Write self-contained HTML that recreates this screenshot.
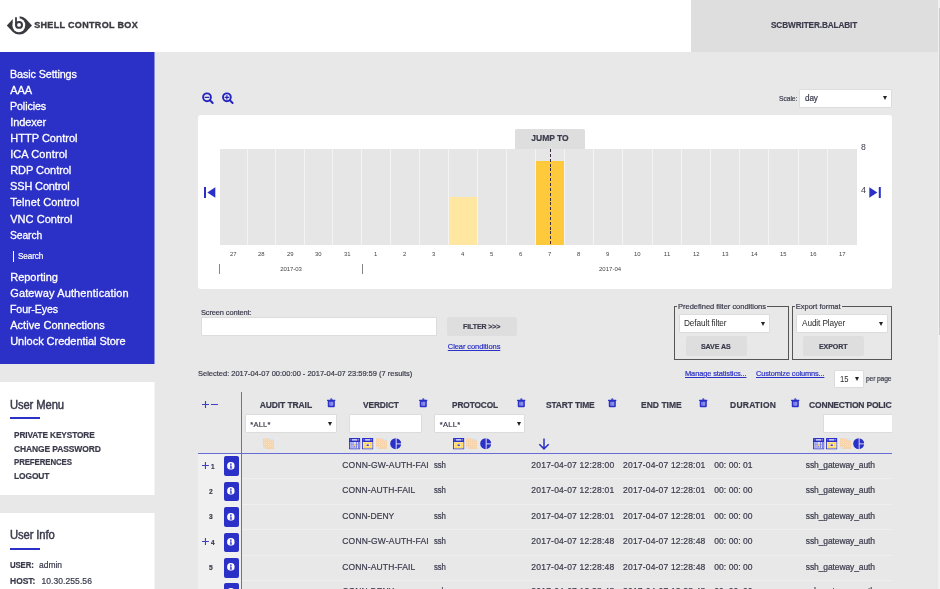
<!DOCTYPE html>
<html><head><meta charset="utf-8"><title>Shell Control Box</title>
<style>
html,body{margin:0;padding:0;}
html{width:940px;height:589px;overflow:hidden;}
body{width:940px;height:589px;overflow:hidden;background:#e8e8e8;position:relative;font-family:"Liberation Sans",sans-serif;}
div,span,svg{position:absolute;box-sizing:border-box;}
svg{overflow:visible;}
.t{white-space:pre;line-height:1;font-family:"Liberation Sans",sans-serif;-webkit-text-stroke:0.2px currentColor;}
.w{background:#fff;}
.btn{background:#dedede;border-radius:2px;}
.inp{background:#fff;border:1px solid #dcdcdc;border-radius:1px;}
.arr{width:0;height:0;border-left:2.4px solid transparent;border-right:2.4px solid transparent;border-top:4px solid #222;}
.sep{width:1px;top:149px;height:96px;background:#f4f4f4;}
.rowl{left:198px;width:43px;background:#f0f0f0;}
.rsep{left:198px;width:694px;height:1px;background:#efefef;}
.ib{left:224px;width:15px;height:19.5px;background:#2b30c6;border-radius:2px;}
</style></head><body>
<div id="root" style="left:0;top:0;width:940px;height:589px;overflow:hidden">
<svg width="0" height="0" style="left:0;top:0">
<defs>
<symbol id="trash" viewBox="0 0 9 10"><path d="M3.1 1.9 Q3.3 0.2 4.5 0.2 Q5.7 0.2 5.9 1.9z" fill="#2b30c6"/><rect x="0" y="1.7" width="9" height="1.3" rx="0.4" fill="#2b30c6"/><path d="M0.8 2.9h7.4v5.7a1.2 1.2 0 0 1-1.2 1.2h-5a1.2 1.2 0 0 1-1.2-1.2z" fill="#2b30c6"/><rect x="2.3" y="4" width="4.4" height="4" fill="#5d61da"/><rect x="2.7" y="4" width="0.9" height="4" fill="#9a9de8"/><rect x="4.1" y="4" width="0.9" height="4" fill="#9a9de8"/><rect x="5.5" y="4" width="0.9" height="4" fill="#9a9de8"/></symbol>
<symbol id="ic1" viewBox="0 0 12 12"><rect x="0" y="0" width="12" height="12" rx="0.6" fill="#2b30c6"/><rect x="0.9" y="4.2" width="10.2" height="6.9" fill="#dddef7"/><rect x="3.2" y="1.35" width="5.6" height="1.25" fill="#fff"/><rect x="1.5" y="1.5" width="0.9" height="0.9" fill="#e6e7fb"/><rect x="9.6" y="1.5" width="0.9" height="0.9" fill="#e6e7fb"/><rect x="1.7" y="4.2" width="0.9" height="6.9" fill="#6d71dc"/><rect x="3.8" y="4.2" width="0.9" height="6.9" fill="#6d71dc"/><rect x="7.4" y="4.2" width="0.9" height="6.9" fill="#6d71dc"/><rect x="9.5" y="4.2" width="0.9" height="6.9" fill="#6d71dc"/><rect x="1.7" y="6.3" width="8.7" height="0.7" fill="#8f92e4"/><rect x="4.8" y="6.9" width="2.5" height="1.4" fill="#ffd24d"/><rect x="5.2" y="8.9" width="1.6" height="1" fill="#4b50d4"/></symbol>
<symbol id="ic2" viewBox="0 0 12 12"><rect x="0" y="0" width="12" height="12" rx="0.6" fill="#2b30c6"/><rect x="0.9" y="4.2" width="10.2" height="6.9" fill="#ffefc0"/><rect x="3.2" y="1.35" width="5.6" height="1.25" fill="#fff"/><rect x="1.5" y="1.5" width="0.9" height="0.9" fill="#e6e7fb"/><rect x="9.6" y="1.5" width="0.9" height="0.9" fill="#e6e7fb"/><g fill="#ffd24d"><rect x="1.6" y="4.8" width="2.6" height="1.5"/><rect x="4.7" y="4.8" width="2.6" height="1.5"/><rect x="7.8" y="4.8" width="2.6" height="1.5"/><rect x="1.6" y="6.9" width="2.6" height="1.5"/><rect x="7.8" y="6.9" width="2.6" height="1.5"/><rect x="1.6" y="9" width="2.6" height="1.5"/><rect x="4.7" y="9" width="2.6" height="1.5"/><rect x="7.8" y="9" width="2.6" height="1.5"/></g><rect x="4.8" y="6.8" width="2.4" height="1.6" fill="#3b40d0"/></symbol>
<symbol id="ic3" viewBox="0 0 12 12"><rect x="0" y="0.5" width="11.6" height="11" fill="#d6e6f4"/><path d="M0 0.6h7.4v2h4.2v8.9h-9v-2.3h-2.6z" fill="#f6d3aa"/><g fill="#fff4e6"><circle cx="1.7" cy="2.2" r="0.5"/><circle cx="3.7" cy="2.2" r="0.5"/><circle cx="5.7" cy="2.2" r="0.5"/><circle cx="1.7" cy="4.4" r="0.5"/><circle cx="3.7" cy="4.4" r="0.5"/><circle cx="5.7" cy="4.4" r="0.5"/><circle cx="7.7" cy="4.4" r="0.5"/><circle cx="9.7" cy="4.4" r="0.5"/><circle cx="1.7" cy="6.6" r="0.5"/><circle cx="3.7" cy="6.6" r="0.5"/><circle cx="5.7" cy="6.6" r="0.5"/><circle cx="7.7" cy="6.6" r="0.5"/><circle cx="9.7" cy="6.6" r="0.5"/><circle cx="3.7" cy="8.8" r="0.5"/><circle cx="5.7" cy="8.8" r="0.5"/><circle cx="7.7" cy="8.8" r="0.5"/><circle cx="9.7" cy="8.8" r="0.5"/></g></symbol>
<symbol id="ic4" viewBox="0 0 12 12"><circle cx="6" cy="6" r="5.8" fill="#2b30c6"/><path d="M6.5 0v12M6.5 6.2h6" stroke="#f4f4ff" stroke-width="0.9"/></symbol>
<symbol id="plus" viewBox="0 0 7 7"><path d="M3.5 0v7M0 3.5h7" stroke="#3a3fcc" stroke-width="1.1"/></symbol>
<symbol id="info" viewBox="0 0 8 8"><circle cx="4" cy="4" r="3.9" fill="#fff"/><circle cx="4" cy="2.2" r="0.85" fill="#2b30c6"/><path d="M3.1 3.5h1.6v2.3h0.6v0.8h-2.5v-0.8h0.6v-1.5h-0.3z" fill="#2b30c6"/></symbol>
</defs></svg>

<!-- header -->
<div class="w" style="left:0;top:0;width:691px;height:52px"></div>
<div style="left:691px;top:0;width:247px;height:52px;background:#dedede"></div>
<div style="left:938px;top:0;width:2px;height:589px;background:#f1f1f1"></div>
<div style="left:939px;top:8px;width:1px;height:327px;background:#cbcbcb"></div>
<svg style="left:5px;top:14px" width="30" height="23" viewBox="5 14 30 23">
 <circle cx="19.4" cy="25.4" r="9.2" fill="#3b3940"/>
 <path d="M6.8 25.5L12.7 19.2V31.8Z" fill="#3b3940"/>
 <path d="M32 25.5L26.1 19.2V31.8Z" fill="#3b3940"/>
 <ellipse cx="18.8" cy="25.3" rx="6.4" ry="7" fill="#fff"/>
 <path d="M12.7 14H19.6V19.2L12.7 22.5Z" fill="#fff"/>
 <path d="M16 17.9V25" fill="none" stroke="#3b3940" stroke-width="1.8" stroke-linecap="round"/>
 <circle cx="19.05" cy="24.9" r="2.95" fill="none" stroke="#3b3940" stroke-width="2"/>
</svg>

<!-- sidebar -->
<div style="left:0;top:52px;width:154px;height:312px;background:#2b30c6"></div>
<div style="left:154px;top:52px;width:1px;height:312px;background:#8a8dd7"></div>
<div style="left:13px;top:251px;width:1px;height:10.5px;background:#fff"></div>
<div class="w" style="left:0;top:382px;width:154px;height:112.5px"></div>
<div style="left:154px;top:382px;width:1px;height:112.5px;background:#f4f4f4"></div>
<div style="left:10px;top:417px;width:29.5px;height:2px;background:#2b30c6"></div>
<div class="w" style="left:0;top:513px;width:154px;height:76px"></div>
<div style="left:154px;top:513px;width:1px;height:76px;background:#f4f4f4"></div>
<div style="left:10px;top:547.5px;width:29.5px;height:2px;background:#2b30c6"></div>

<!-- zoom icons -->
<svg style="left:200px;top:91px" width="36" height="14" viewBox="200 91 36 14">
 <g fill="none" stroke="#2424bf" stroke-linecap="round">
 <circle cx="207" cy="97.3" r="3.9" stroke-width="1.9"/><path d="M210.2 100.5L212.7 103" stroke-width="1.9"/><path d="M205.2 97.3h3.6" stroke-width="1.2"/>
 <circle cx="226.9" cy="97.3" r="3.9" stroke-width="1.9"/><path d="M230.1 100.5L232.6 103" stroke-width="1.9"/><path d="M225.1 97.3h3.6M226.9 95.5v3.6" stroke-width="1.2"/>
 </g>
</svg>

<!-- scale select -->
<div class="inp" style="left:799px;top:88.5px;width:92.5px;height:19px"></div>
<div class="arr" style="left:882.7px;top:96.2px"></div>

<!-- chart panel -->
<div class="w" style="left:198px;top:115px;width:694px;height:174px;border-radius:3px"></div>
<div style="left:220px;top:149px;width:637px;height:96px;background:#e6e6e6"></div>
<div class="sep" style="left:247px"></div><div class="sep" style="left:275px"></div><div class="sep" style="left:304px"></div><div class="sep" style="left:332px"></div><div class="sep" style="left:361px"></div><div class="sep" style="left:390px"></div><div class="sep" style="left:419px"></div><div class="sep" style="left:448px"></div><div class="sep" style="left:477px"></div><div class="sep" style="left:506px"></div><div class="sep" style="left:535px"></div><div class="sep" style="left:564px"></div><div class="sep" style="left:593px"></div><div class="sep" style="left:622px"></div><div class="sep" style="left:652px"></div><div class="sep" style="left:681px"></div><div class="sep" style="left:710px"></div><div class="sep" style="left:739px"></div><div class="sep" style="left:768px"></div><div class="sep" style="left:798px"></div><div class="sep" style="left:827px"></div>
<div style="left:449px;top:196.5px;width:28px;height:48.5px;background:#ffe6a1"></div>
<div style="left:536px;top:160.5px;width:28px;height:84.5px;background:#ffc93c"></div>
<div style="left:515px;top:129px;width:70px;height:20px;background:#dedede;border-radius:2px 2px 0 0"></div>
<div style="left:550px;top:149px;width:1px;height:96px;background:repeating-linear-gradient(to bottom,#3a2c3c 0,#3a2c3c 3px,transparent 3px,transparent 4.85px)"></div>
<div style="left:219px;top:264px;width:1px;height:10px;background:#858585"></div>
<div style="left:362px;top:264px;width:1px;height:10px;background:#858585"></div>
<svg style="left:203px;top:186px" width="14" height="13" viewBox="203 186 14 13"><rect x="204" y="187" width="2" height="11" fill="#2b30c6"/><path d="M207.3 192.5L215.3 187.2V197.8Z" fill="#2b30c6"/></svg>
<svg style="left:868px;top:186px" width="14" height="13" viewBox="868 186 14 13"><rect x="878.8" y="187" width="2" height="11" fill="#2b30c6"/><path d="M877.3 192.5L869.3 187.2V197.8Z" fill="#2b30c6"/></svg>

<!-- form -->
<div class="inp" style="left:201px;top:317px;width:235.5px;height:18.5px"></div>
<div class="btn" style="left:447px;top:316.5px;width:69.5px;height:19.5px"></div>
<div style="left:674px;top:306px;width:114.5px;height:53.5px;border:1px solid #555"></div>
<div style="left:792px;top:306px;width:99.5px;height:53.5px;border:1px solid #555"></div>
<div style="left:677px;top:303px;width:90px;height:7px;background:#e8e8e8"></div>
<div style="left:795px;top:303px;width:46.5px;height:7px;background:#e8e8e8"></div>
<div class="inp" style="left:678.5px;top:314px;width:91.5px;height:18.5px"></div>
<div class="arr" style="left:761.4px;top:321.5px"></div>
<div class="inp" style="left:796px;top:314px;width:91.5px;height:18.5px"></div>
<div class="arr" style="left:879px;top:321.5px"></div>
<div class="btn" style="left:685.5px;top:336px;width:61.5px;height:19.5px"></div>
<div class="btn" style="left:803px;top:336px;width:61px;height:19.5px"></div>
<div class="inp" style="left:833.5px;top:369.5px;width:30px;height:18.5px"></div>
<div class="arr" style="left:854.9px;top:376.8px"></div>

<!-- table -->
<div id="tbl" style="left:198px;top:390px;width:694px;height:199px;overflow:hidden;will-change:transform">
 <span class="t" style="left:611.1px;top:10.8px;font-size:8.5px;font-weight:700;color:#3a3a4c;letter-spacing:-0.199px">CONNECTION POLICY</span>
 <div class="inp" style="left:625px;top:24.4px;width:80px;height:19px"></div>
</div>
<div class="rowl" style="top:454.0px;height:24.4px"></div><div class="rsep" style="top:478.4px"></div><div class="ib" style="top:456.4px"></div><svg style="left:227.3px;top:461.7px" width="7.8" height="7.8"><use href="#info"/></svg><svg style="left:202px;top:461.8px" width="6.9" height="6.9"><use href="#plus"/></svg><div class="rowl" style="top:479.4px;height:24.4px"></div><div class="rsep" style="top:503.8px"></div><div class="ib" style="top:481.8px"></div><svg style="left:227.3px;top:487.1px" width="7.8" height="7.8"><use href="#info"/></svg><div class="rowl" style="top:504.8px;height:24.4px"></div><div class="rsep" style="top:529.2px"></div><div class="ib" style="top:507.2px"></div><svg style="left:227.3px;top:512.5px" width="7.8" height="7.8"><use href="#info"/></svg><div class="rowl" style="top:530.2px;height:24.4px"></div><div class="rsep" style="top:554.6px"></div><div class="ib" style="top:532.6px"></div><svg style="left:227.3px;top:537.9px" width="7.8" height="7.8"><use href="#info"/></svg><svg style="left:202px;top:538.0px" width="6.9" height="6.9"><use href="#plus"/></svg><div class="rowl" style="top:555.6px;height:24.4px"></div><div class="rsep" style="top:580.0px"></div><div class="ib" style="top:558.0px"></div><svg style="left:227.3px;top:563.3px" width="7.8" height="7.8"><use href="#info"/></svg><div class="rowl" style="top:580.2px;height:24.4px"></div><div class="rsep" style="top:604.6px"></div><div class="ib" style="top:582.6px"></div><svg style="left:227.3px;top:587.9px" width="7.8" height="7.8"><use href="#info"/></svg>
<div style="left:241px;top:392px;width:1px;height:197px;background:#666bd5"></div>
<div style="left:198px;top:453px;width:694px;height:1px;background:#666bd5"></div>
<svg style="left:201.5px;top:401.3px" width="7" height="7"><use href="#plus"/></svg>
<div style="left:210.8px;top:404.2px;width:6.8px;height:1.1px;background:#3a3fcc"></div>
<div class="inp" style="left:244.7px;top:414.4px;width:92px;height:19px"></div>
<div class="arr" style="left:327.9px;top:421.8px"></div>
<div class="inp" style="left:348.7px;top:414.4px;width:73px;height:19px"></div>
<div class="inp" style="left:434.2px;top:414.4px;width:91px;height:19px"></div>
<div class="arr" style="left:517.1px;top:421.8px"></div>
<svg style="left:327.2px;top:398.1px" width="8.6" height="9.6"><use href="#trash"/></svg><svg style="left:418.8px;top:398.1px" width="8.6" height="9.6"><use href="#trash"/></svg><svg style="left:516.5px;top:398.1px" width="8.6" height="9.6"><use href="#trash"/></svg><svg style="left:607.9px;top:398.1px" width="8.6" height="9.6"><use href="#trash"/></svg><svg style="left:699.4px;top:398.1px" width="8.6" height="9.6"><use href="#trash"/></svg><svg style="left:790.9px;top:398.1px" width="8.6" height="9.6"><use href="#trash"/></svg>
<svg style="left:263.2px;top:437.6px" width="11.4" height="11.4"><use href="#ic3"/></svg><svg style="left:348.7px;top:437.6px" width="11.4" height="11.4"><use href="#ic1"/></svg><svg style="left:362.3px;top:437.6px" width="11.4" height="11.4"><use href="#ic2"/></svg><svg style="left:376px;top:437.6px" width="11.4" height="11.4"><use href="#ic3"/></svg><svg style="left:389.5px;top:437.6px" width="11.4" height="11.4"><use href="#ic4"/></svg><svg style="left:452.6px;top:437.6px" width="11.4" height="11.4"><use href="#ic2"/></svg><svg style="left:466px;top:437.6px" width="11.4" height="11.4"><use href="#ic3"/></svg><svg style="left:479.8px;top:437.6px" width="11.4" height="11.4"><use href="#ic4"/></svg><svg style="left:812.5px;top:437.6px" width="11.4" height="11.4"><use href="#ic1"/></svg><svg style="left:826.2px;top:437.6px" width="11.4" height="11.4"><use href="#ic2"/></svg><svg style="left:839.7px;top:437.6px" width="11.4" height="11.4"><use href="#ic3"/></svg><svg style="left:853.4px;top:437.6px" width="11.4" height="11.4"><use href="#ic4"/></svg>
<svg style="left:537.5px;top:437.5px" width="12" height="12" viewBox="0 0 12 12"><path d="M6 0.5V10.6M1.3 6.2L6 10.9L10.7 6.2" fill="none" stroke="#2b30c6" stroke-width="1.5"/></svg>

<div id="tx" style="left:0;top:0;width:940px;height:589px;overflow:hidden;will-change:transform">
<span class="t" style="left:34.2px;top:21.00px;font-size:9px;font-weight:700;color:#3b3940;letter-spacing:0.332px;-webkit-text-stroke:0.35px #3b3940;">SHELL CONTROL BOX</span>
<span class="t" style="left:771.3px;top:21.00px;font-size:9px;font-weight:700;color:#3a3a4c;letter-spacing:-0.12px;transform:scaleX(0.9125);transform-origin:0 0;">SCBWRITER.BALABIT</span>
<span class="t" style="left:10.2px;top:69.00px;font-size:11px;font-weight:400;color:#ffffff;letter-spacing:-0.12px;transform:scaleX(0.9810);transform-origin:0 0;-webkit-text-stroke:0.3px #fff;">Basic Settings</span>
<span class="t" style="left:10.2px;top:85.00px;font-size:11px;font-weight:400;color:#ffffff;letter-spacing:-0.008px;-webkit-text-stroke:0.3px #fff;">AAA</span>
<span class="t" style="left:10.2px;top:101.00px;font-size:11px;font-weight:400;color:#ffffff;letter-spacing:-0.12px;transform:scaleX(0.9739);transform-origin:0 0;-webkit-text-stroke:0.3px #fff;">Policies</span>
<span class="t" style="left:10.2px;top:117.00px;font-size:11px;font-weight:400;color:#ffffff;letter-spacing:-0.101px;-webkit-text-stroke:0.3px #fff;">Indexer</span>
<span class="t" style="left:10.2px;top:133.00px;font-size:11px;font-weight:400;color:#ffffff;letter-spacing:0.023px;-webkit-text-stroke:0.3px #fff;">HTTP Control</span>
<span class="t" style="left:10.2px;top:149.00px;font-size:11px;font-weight:400;color:#ffffff;letter-spacing:0.085px;-webkit-text-stroke:0.3px #fff;">ICA Control</span>
<span class="t" style="left:10.2px;top:165.00px;font-size:11px;font-weight:400;color:#ffffff;letter-spacing:-0.045px;-webkit-text-stroke:0.3px #fff;">RDP Control</span>
<span class="t" style="left:10.2px;top:181.00px;font-size:11px;font-weight:400;color:#ffffff;letter-spacing:-0.12px;transform:scaleX(0.9960);transform-origin:0 0;-webkit-text-stroke:0.3px #fff;">SSH Control</span>
<span class="t" style="left:10.2px;top:197.00px;font-size:11px;font-weight:400;color:#ffffff;letter-spacing:0.079px;-webkit-text-stroke:0.3px #fff;">Telnet Control</span>
<span class="t" style="left:10.2px;top:214.00px;font-size:11px;font-weight:400;color:#ffffff;letter-spacing:0.045px;-webkit-text-stroke:0.3px #fff;">VNC Control</span>
<span class="t" style="left:10.2px;top:230.00px;font-size:11px;font-weight:400;color:#ffffff;letter-spacing:-0.12px;transform:scaleX(0.9399);transform-origin:0 0;-webkit-text-stroke:0.3px #fff;">Search</span>
<span class="t" style="left:10.2px;top:272.00px;font-size:11px;font-weight:400;color:#ffffff;letter-spacing:-0.0px;-webkit-text-stroke:0.3px #fff;">Reporting</span>
<span class="t" style="left:10.2px;top:288.00px;font-size:11px;font-weight:400;color:#ffffff;letter-spacing:0.139px;-webkit-text-stroke:0.3px #fff;">Gateway Authentication</span>
<span class="t" style="left:10.2px;top:304.00px;font-size:11px;font-weight:400;color:#ffffff;letter-spacing:-0.12px;transform:scaleX(0.9640);transform-origin:0 0;-webkit-text-stroke:0.3px #fff;">Four-Eyes</span>
<span class="t" style="left:10.2px;top:320.00px;font-size:11px;font-weight:400;color:#ffffff;letter-spacing:0.031px;-webkit-text-stroke:0.3px #fff;">Active Connections</span>
<span class="t" style="left:10.2px;top:336.00px;font-size:11px;font-weight:400;color:#ffffff;letter-spacing:-0.035px;-webkit-text-stroke:0.3px #fff;">Unlock Credential Store</span>
<span class="t" style="left:17.5px;top:252.00px;font-size:9px;font-weight:400;color:#ffffff;letter-spacing:-0.12px;transform:scaleX(0.9058);transform-origin:0 0;">Search</span>
<span class="t" style="left:10.2px;top:399.00px;font-size:12px;font-weight:400;color:#3a3a4c;letter-spacing:-0.12px;transform:scaleX(0.9354);transform-origin:0 0;-webkit-text-stroke:0.45px #3a3a4c;">User Menu</span>
<span class="t" style="left:13.7px;top:431.00px;font-size:9px;font-weight:700;color:#3a3a4c;letter-spacing:-0.12px;transform:scaleX(0.9199);transform-origin:0 0;">PRIVATE KEYSTORE</span>
<span class="t" style="left:13.7px;top:445.00px;font-size:9px;font-weight:700;color:#3a3a4c;letter-spacing:-0.12px;transform:scaleX(0.9418);transform-origin:0 0;">CHANGE PASSWORD</span>
<span class="t" style="left:13.7px;top:458.00px;font-size:9px;font-weight:700;color:#3a3a4c;letter-spacing:-0.12px;transform:scaleX(0.8746);transform-origin:0 0;">PREFERENCES</span>
<span class="t" style="left:13.7px;top:472.00px;font-size:9px;font-weight:700;color:#3a3a4c;letter-spacing:-0.12px;transform:scaleX(0.9367);transform-origin:0 0;">LOGOUT</span>
<span class="t" style="left:10.1px;top:529.00px;font-size:12px;font-weight:400;color:#3a3a4c;letter-spacing:-0.12px;transform:scaleX(0.9387);transform-origin:0 0;-webkit-text-stroke:0.45px #3a3a4c;">User Info</span>
<span class="t" style="left:10.1px;top:561.00px;font-size:8.5px;font-weight:700;color:#3a3a4c;letter-spacing:-0.12px;transform:scaleX(0.9163);transform-origin:0 0;">USER:</span>
<span class="t" style="left:39.0px;top:561.00px;font-size:8.5px;font-weight:400;color:#3a3a4c;letter-spacing:-0.039px;">admin</span>
<span class="t" style="left:10.1px;top:577.00px;font-size:8.5px;font-weight:700;color:#3a3a4c;letter-spacing:-0.05px;">HOST:</span>
<span class="t" style="left:41.4px;top:577.00px;font-size:8.5px;font-weight:400;color:#3a3a4c;letter-spacing:0.078px;">10.30.255.56</span>
<span class="t" style="left:778.6px;top:95.00px;font-size:8px;font-weight:400;color:#3a3a4c;letter-spacing:-0.12px;transform:scaleX(0.8505);transform-origin:0 0;">Scale:</span>
<span class="t" style="left:805.1px;top:94.00px;font-size:8.5px;font-weight:400;color:#3a3a4c;letter-spacing:-0.12px;transform:scaleX(0.9571);transform-origin:0 0;">day</span>
<span class="t" style="left:860.9px;top:143.00px;font-size:8.5px;font-weight:400;color:#3a3a4c;letter-spacing:0px;transform:scaleX(1.0139);transform-origin:0 0;-webkit-text-stroke:0;">8</span>
<span class="t" style="left:860.7px;top:186.00px;font-size:8.5px;font-weight:400;color:#3a3a4c;letter-spacing:0px;transform:scaleX(1.0561);transform-origin:0 0;-webkit-text-stroke:0;">4</span>
<span class="t" style="left:531.3px;top:134.00px;font-size:8.5px;font-weight:700;color:#3a3a4c;letter-spacing:-0.014px;">JUMP TO</span>
<span class="t" style="left:230.25px;top:251.00px;font-size:6px;font-weight:400;color:#444;letter-spacing:-0.12px;transform:scaleX(0.9897);transform-origin:0 0;-webkit-text-stroke:0;">27</span>
<span class="t" style="left:258.25px;top:251.00px;font-size:6px;font-weight:400;color:#444;letter-spacing:-0.12px;transform:scaleX(0.9897);transform-origin:0 0;-webkit-text-stroke:0;">28</span>
<span class="t" style="left:286.75px;top:251.00px;font-size:6px;font-weight:400;color:#444;letter-spacing:-0.12px;transform:scaleX(0.9897);transform-origin:0 0;-webkit-text-stroke:0;">29</span>
<span class="t" style="left:315.25px;top:251.00px;font-size:6px;font-weight:400;color:#444;letter-spacing:-0.12px;transform:scaleX(0.9897);transform-origin:0 0;-webkit-text-stroke:0;">30</span>
<span class="t" style="left:343.75px;top:251.00px;font-size:6px;font-weight:400;color:#444;letter-spacing:-0.12px;transform:scaleX(0.9897);transform-origin:0 0;-webkit-text-stroke:0;">31</span>
<span class="t" style="left:374.35px;top:251.00px;font-size:6px;font-weight:400;color:#444;letter-spacing:0px;transform:scaleX(0.9869);transform-origin:0 0;-webkit-text-stroke:0;">1</span>
<span class="t" style="left:403.35px;top:251.00px;font-size:6px;font-weight:400;color:#444;letter-spacing:0px;transform:scaleX(0.9869);transform-origin:0 0;-webkit-text-stroke:0;">2</span>
<span class="t" style="left:432.35px;top:251.00px;font-size:6px;font-weight:400;color:#444;letter-spacing:0px;transform:scaleX(0.9869);transform-origin:0 0;-webkit-text-stroke:0;">3</span>
<span class="t" style="left:461.35px;top:251.00px;font-size:6px;font-weight:400;color:#444;letter-spacing:0px;transform:scaleX(0.9869);transform-origin:0 0;-webkit-text-stroke:0;">4</span>
<span class="t" style="left:490.35px;top:251.00px;font-size:6px;font-weight:400;color:#444;letter-spacing:0px;transform:scaleX(0.9869);transform-origin:0 0;-webkit-text-stroke:0;">5</span>
<span class="t" style="left:519.35px;top:251.00px;font-size:6px;font-weight:400;color:#444;letter-spacing:0px;transform:scaleX(0.9869);transform-origin:0 0;-webkit-text-stroke:0;">6</span>
<span class="t" style="left:548.35px;top:251.00px;font-size:6px;font-weight:400;color:#444;letter-spacing:0px;transform:scaleX(0.9869);transform-origin:0 0;-webkit-text-stroke:0;">7</span>
<span class="t" style="left:577.35px;top:251.00px;font-size:6px;font-weight:400;color:#444;letter-spacing:0px;transform:scaleX(0.9869);transform-origin:0 0;-webkit-text-stroke:0;">8</span>
<span class="t" style="left:606.35px;top:251.00px;font-size:6px;font-weight:400;color:#444;letter-spacing:0px;transform:scaleX(0.9869);transform-origin:0 0;-webkit-text-stroke:0;">9</span>
<span class="t" style="left:634.25px;top:251.00px;font-size:6px;font-weight:400;color:#444;letter-spacing:-0.12px;transform:scaleX(0.9897);transform-origin:0 0;-webkit-text-stroke:0;">10</span>
<span class="t" style="left:663.75px;top:251.00px;font-size:6px;font-weight:400;color:#444;letter-spacing:0.266px;-webkit-text-stroke:0;">11</span>
<span class="t" style="left:692.75px;top:251.00px;font-size:6px;font-weight:400;color:#444;letter-spacing:-0.12px;transform:scaleX(0.9897);transform-origin:0 0;-webkit-text-stroke:0;">12</span>
<span class="t" style="left:721.75px;top:251.00px;font-size:6px;font-weight:400;color:#444;letter-spacing:-0.12px;transform:scaleX(0.9897);transform-origin:0 0;-webkit-text-stroke:0;">13</span>
<span class="t" style="left:750.75px;top:251.00px;font-size:6px;font-weight:400;color:#444;letter-spacing:-0.12px;transform:scaleX(0.9897);transform-origin:0 0;-webkit-text-stroke:0;">14</span>
<span class="t" style="left:780.25px;top:251.00px;font-size:6px;font-weight:400;color:#444;letter-spacing:-0.12px;transform:scaleX(0.9897);transform-origin:0 0;-webkit-text-stroke:0;">15</span>
<span class="t" style="left:809.75px;top:251.00px;font-size:6px;font-weight:400;color:#444;letter-spacing:-0.12px;transform:scaleX(0.9897);transform-origin:0 0;-webkit-text-stroke:0;">16</span>
<span class="t" style="left:839.25px;top:251.00px;font-size:6px;font-weight:400;color:#444;letter-spacing:-0.12px;transform:scaleX(0.9897);transform-origin:0 0;-webkit-text-stroke:0;">17</span>
<span class="t" style="left:280.2px;top:266.00px;font-size:6px;font-weight:400;color:#444;letter-spacing:-0.072px;-webkit-text-stroke:0;">2017-03</span>
<span class="t" style="left:599.0px;top:266.00px;font-size:6px;font-weight:400;color:#444;letter-spacing:0.011px;-webkit-text-stroke:0;">2017-04</span>
<span class="t" style="left:201.1px;top:309.00px;font-size:7.5px;font-weight:400;color:#3a3a4c;letter-spacing:-0.12px;transform:scaleX(0.9928);transform-origin:0 0;">Screen content:</span>
<span class="t" style="left:462.6px;top:323.00px;font-size:7.5px;font-weight:700;color:#3a3a4c;letter-spacing:-0.12px;transform:scaleX(0.9412);transform-origin:0 0;">FILTER &gt;&gt;&gt;</span>
<span class="t" style="left:447.8px;top:343.00px;font-size:7.5px;font-weight:400;color:#2b30c6;letter-spacing:-0.079px;text-decoration:underline;">Clear conditions</span>
<span class="t" style="left:198.0px;top:370.00px;font-size:7.5px;font-weight:400;color:#3a3a4c;letter-spacing:-0.007px;">Selected: 2017-04-07 00:00:00 - 2017-04-07 23:59:59 (7 results)</span>
<span class="t" style="left:678.1px;top:303.00px;font-size:7.5px;font-weight:400;color:#3a3a4c;letter-spacing:-0.018px;">Predefined filter conditions</span>
<span class="t" style="left:795.8px;top:303.00px;font-size:7.5px;font-weight:400;color:#3a3a4c;letter-spacing:-0.018px;">Export format</span>
<span class="t" style="left:684.0px;top:319.00px;font-size:8.5px;font-weight:400;color:#2a2a2a;letter-spacing:-0.12px;transform:scaleX(0.9726);transform-origin:0 0;-webkit-text-stroke:0;">Default filter</span>
<span class="t" style="left:801.6px;top:319.00px;font-size:8.5px;font-weight:400;color:#2a2a2a;letter-spacing:-0.12px;transform:scaleX(0.9725);transform-origin:0 0;-webkit-text-stroke:0;">Audit Player</span>
<span class="t" style="left:701.2px;top:343.00px;font-size:7.5px;font-weight:700;color:#3a3a4c;letter-spacing:-0.12px;transform:scaleX(0.9467);transform-origin:0 0;">SAVE AS</span>
<span class="t" style="left:819.0px;top:343.00px;font-size:7.5px;font-weight:700;color:#3a3a4c;letter-spacing:-0.12px;transform:scaleX(0.9456);transform-origin:0 0;">EXPORT</span>
<span class="t" style="left:684.5px;top:370.00px;font-size:7.5px;font-weight:400;color:#2b30c6;letter-spacing:-0.12px;text-decoration:underline;transform:scaleX(0.9948);transform-origin:0 0;">Manage statistics...</span>
<span class="t" style="left:755.5px;top:370.00px;font-size:7.5px;font-weight:400;color:#2b30c6;letter-spacing:-0.12px;text-decoration:underline;transform:scaleX(0.9867);transform-origin:0 0;">Customize columns...</span>
<span class="t" style="left:840.0px;top:375.00px;font-size:8.5px;font-weight:400;color:#2a2a2a;letter-spacing:-0.12px;transform:scaleX(0.8985);transform-origin:0 0;-webkit-text-stroke:0;">15</span>
<span class="t" style="left:866.0px;top:375.00px;font-size:7.5px;font-weight:400;color:#3a3a4c;letter-spacing:-0.12px;transform:scaleX(0.8864);transform-origin:0 0;">per page</span>
<span class="t" style="left:259.7px;top:401.00px;font-size:8.5px;font-weight:700;color:#3a3a4c;letter-spacing:-0.096px;">AUDIT TRAIL</span>
<span class="t" style="left:362.7px;top:401.00px;font-size:8.5px;font-weight:700;color:#3a3a4c;letter-spacing:-0.12px;transform:scaleX(0.9811);transform-origin:0 0;">VERDICT</span>
<span class="t" style="left:452.2px;top:401.00px;font-size:8.5px;font-weight:700;color:#3a3a4c;letter-spacing:-0.12px;transform:scaleX(0.9793);transform-origin:0 0;">PROTOCOL</span>
<span class="t" style="left:545.7px;top:401.00px;font-size:8.5px;font-weight:700;color:#3a3a4c;letter-spacing:-0.12px;transform:scaleX(0.9859);transform-origin:0 0;">START TIME</span>
<span class="t" style="left:641.0px;top:401.00px;font-size:8.5px;font-weight:700;color:#3a3a4c;letter-spacing:0.025px;">END TIME</span>
<span class="t" style="left:730.0px;top:401.00px;font-size:8.5px;font-weight:700;color:#3a3a4c;letter-spacing:0.238px;">DURATION</span>
<span class="t" style="left:250.3px;top:421.00px;font-size:7.5px;font-weight:400;color:#3a3a4c;letter-spacing:0.228px;">*ALL*</span>
<span class="t" style="left:439.8px;top:421.00px;font-size:7.5px;font-weight:400;color:#3a3a4c;letter-spacing:0.303px;">*ALL*</span>
<span class="t" style="left:342.3px;top:461.00px;font-size:8.5px;font-weight:400;color:#3a3a4c;letter-spacing:0.166px;">CONN-GW-AUTH-FAI</span>
<span class="t" style="left:433.8px;top:461.00px;font-size:8.5px;font-weight:400;color:#3a3a4c;letter-spacing:-0.12px;transform:scaleX(0.9158);transform-origin:0 0;">ssh</span>
<span class="t" style="left:531.3px;top:461.00px;font-size:8.5px;font-weight:400;color:#3a3a4c;letter-spacing:0.226px;">2017-04-07 12:28:00</span>
<span class="t" style="left:623.1px;top:461.00px;font-size:8.5px;font-weight:400;color:#3a3a4c;letter-spacing:0.181px;">2017-04-07 12:28:01</span>
<span class="t" style="left:714.2px;top:461.00px;font-size:8.5px;font-weight:400;color:#3a3a4c;letter-spacing:0.065px;">00: 00: 01</span>
<span class="t" style="left:805.8px;top:461.00px;font-size:8.5px;font-weight:400;color:#3a3a4c;letter-spacing:-0.106px;">ssh_gateway_auth</span>
<span class="t" style="left:211.2px;top:463.00px;font-size:7px;font-weight:700;color:#3a3a4c;letter-spacing:0px;transform:scaleX(0.9216);transform-origin:0 0;">1</span>
<span class="t" style="left:342.3px;top:486.00px;font-size:8.5px;font-weight:400;color:#3a3a4c;letter-spacing:0.122px;">CONN-AUTH-FAIL</span>
<span class="t" style="left:433.8px;top:486.00px;font-size:8.5px;font-weight:400;color:#3a3a4c;letter-spacing:-0.12px;transform:scaleX(0.9158);transform-origin:0 0;">ssh</span>
<span class="t" style="left:531.3px;top:486.00px;font-size:8.5px;font-weight:400;color:#3a3a4c;letter-spacing:0.226px;">2017-04-07 12:28:01</span>
<span class="t" style="left:623.1px;top:486.00px;font-size:8.5px;font-weight:400;color:#3a3a4c;letter-spacing:0.181px;">2017-04-07 12:28:01</span>
<span class="t" style="left:714.2px;top:486.00px;font-size:8.5px;font-weight:400;color:#3a3a4c;letter-spacing:0.065px;">00: 00: 00</span>
<span class="t" style="left:805.8px;top:486.00px;font-size:8.5px;font-weight:400;color:#3a3a4c;letter-spacing:-0.106px;">ssh_gateway_auth</span>
<span class="t" style="left:208.5px;top:488.00px;font-size:7px;font-weight:700;color:#3a3a4c;letter-spacing:0px;transform:scaleX(0.9472);transform-origin:0 0;">2</span>
<span class="t" style="left:342.3px;top:512.00px;font-size:8.5px;font-weight:400;color:#3a3a4c;letter-spacing:0.064px;">CONN-DENY</span>
<span class="t" style="left:433.8px;top:512.00px;font-size:8.5px;font-weight:400;color:#3a3a4c;letter-spacing:-0.12px;transform:scaleX(0.9158);transform-origin:0 0;">ssh</span>
<span class="t" style="left:531.3px;top:512.00px;font-size:8.5px;font-weight:400;color:#3a3a4c;letter-spacing:0.226px;">2017-04-07 12:28:01</span>
<span class="t" style="left:623.1px;top:512.00px;font-size:8.5px;font-weight:400;color:#3a3a4c;letter-spacing:0.181px;">2017-04-07 12:28:01</span>
<span class="t" style="left:714.2px;top:512.00px;font-size:8.5px;font-weight:400;color:#3a3a4c;letter-spacing:0.065px;">00: 00: 00</span>
<span class="t" style="left:805.8px;top:512.00px;font-size:8.5px;font-weight:400;color:#3a3a4c;letter-spacing:-0.106px;">ssh_gateway_auth</span>
<span class="t" style="left:208.5px;top:513.00px;font-size:7px;font-weight:700;color:#3a3a4c;letter-spacing:0px;transform:scaleX(0.9472);transform-origin:0 0;">3</span>
<span class="t" style="left:342.3px;top:537.00px;font-size:8.5px;font-weight:400;color:#3a3a4c;letter-spacing:0.166px;">CONN-GW-AUTH-FAI</span>
<span class="t" style="left:433.8px;top:537.00px;font-size:8.5px;font-weight:400;color:#3a3a4c;letter-spacing:-0.12px;transform:scaleX(0.9158);transform-origin:0 0;">ssh</span>
<span class="t" style="left:531.3px;top:537.00px;font-size:8.5px;font-weight:400;color:#3a3a4c;letter-spacing:0.226px;">2017-04-07 12:28:48</span>
<span class="t" style="left:623.1px;top:537.00px;font-size:8.5px;font-weight:400;color:#3a3a4c;letter-spacing:0.181px;">2017-04-07 12:28:48</span>
<span class="t" style="left:714.2px;top:537.00px;font-size:8.5px;font-weight:400;color:#3a3a4c;letter-spacing:0.065px;">00: 00: 00</span>
<span class="t" style="left:805.8px;top:537.00px;font-size:8.5px;font-weight:400;color:#3a3a4c;letter-spacing:-0.106px;">ssh_gateway_auth</span>
<span class="t" style="left:211.2px;top:539.00px;font-size:7px;font-weight:700;color:#3a3a4c;letter-spacing:0px;transform:scaleX(0.9216);transform-origin:0 0;">4</span>
<span class="t" style="left:342.3px;top:563.00px;font-size:8.5px;font-weight:400;color:#3a3a4c;letter-spacing:0.122px;">CONN-AUTH-FAIL</span>
<span class="t" style="left:433.8px;top:563.00px;font-size:8.5px;font-weight:400;color:#3a3a4c;letter-spacing:-0.12px;transform:scaleX(0.9158);transform-origin:0 0;">ssh</span>
<span class="t" style="left:531.3px;top:563.00px;font-size:8.5px;font-weight:400;color:#3a3a4c;letter-spacing:0.226px;">2017-04-07 12:28:48</span>
<span class="t" style="left:623.1px;top:563.00px;font-size:8.5px;font-weight:400;color:#3a3a4c;letter-spacing:0.181px;">2017-04-07 12:28:48</span>
<span class="t" style="left:714.2px;top:563.00px;font-size:8.5px;font-weight:400;color:#3a3a4c;letter-spacing:0.065px;">00: 00: 00</span>
<span class="t" style="left:805.8px;top:563.00px;font-size:8.5px;font-weight:400;color:#3a3a4c;letter-spacing:-0.106px;">ssh_gateway_auth</span>
<span class="t" style="left:208.5px;top:564.00px;font-size:7px;font-weight:700;color:#3a3a4c;letter-spacing:0px;transform:scaleX(0.9472);transform-origin:0 0;">5</span>
<span class="t" style="left:342.3px;top:587.00px;font-size:8.5px;font-weight:400;color:#3a3a4c;letter-spacing:0.064px;">CONN-DENY</span>
<span class="t" style="left:433.8px;top:587.00px;font-size:8.5px;font-weight:400;color:#3a3a4c;letter-spacing:-0.12px;transform:scaleX(0.9158);transform-origin:0 0;">ssh</span>
<span class="t" style="left:531.3px;top:587.00px;font-size:8.5px;font-weight:400;color:#3a3a4c;letter-spacing:0.226px;">2017-04-07 12:28:48</span>
<span class="t" style="left:623.1px;top:587.00px;font-size:8.5px;font-weight:400;color:#3a3a4c;letter-spacing:0.181px;">2017-04-07 12:28:48</span>
<span class="t" style="left:714.2px;top:587.00px;font-size:8.5px;font-weight:400;color:#3a3a4c;letter-spacing:0.065px;">00: 00: 00</span>
<span class="t" style="left:805.8px;top:587.00px;font-size:8.5px;font-weight:400;color:#3a3a4c;letter-spacing:-0.106px;">ssh_gateway_auth</span>
<span class="t" style="left:208.5px;top:589.00px;font-size:7px;font-weight:700;color:#3a3a4c;letter-spacing:0px;transform:scaleX(0.9472);transform-origin:0 0;">6</span>
</div>
</div>
</body></html>
